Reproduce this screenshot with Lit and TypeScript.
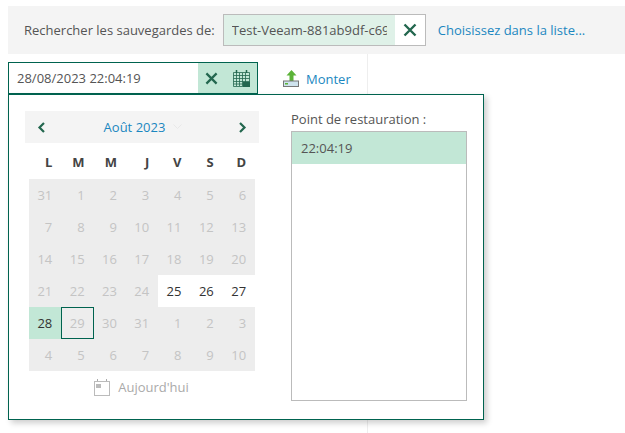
import { LitElement, html, css, svg } from "lit";
import { customElement } from "lit/decorators.js";

const XICON = svg`<path d="M1.5 1.5 L12.5 12.5 M12.5 1.5 L1.5 12.5" stroke="#23674f" stroke-width="2.4" fill="none"/>`;

const rows: [string, string][][] = [
  [31, 1, 2, 3, 4, 5, 6],
  [7, 8, 9, 10, 11, 12, 13],
  [14, 15, 16, 17, 18, 19, 20],
  [21, 22, 23, 24, 25, 26, 27],
  [28, 29, 30, 31, 1, 2, 3],
  [4, 5, 6, 7, 8, 9, 10],
].map((r, ri) =>
  r.map((d, ci) => {
    let c = "off";
    if (ri === 3 && ci >= 4) c = "on";
    if (ri === 4 && ci === 0) c = "sel";
    if (ri === 4 && ci === 1) c = "off today";
    return [String(d), c] as [string, string];
  })
);

@customElement("app-root")
export class AppRoot extends LitElement {
  static styles = css`
    :host { display: block; height: 433px; position: relative; overflow: hidden; background: #fff;
      font-family: "Open Sans", sans-serif; font-size: 13px; color: #555; padding: 6px 0 0 8px; box-sizing: border-box; }
    .bar { height: 48px; background: #f4f4f4; display: flex; align-items: center; padding-left: 16px; }
    .tag { margin-left: 8px; width: 203px; height: 32px; box-sizing: border-box; border: 1px solid #bbb; display: flex; background: #fff; }
    .tag-text { width: 171px; background: #dff1e8; padding: 0 8px 0 8px; box-sizing: border-box; }
    .tag-text div { line-height: 30px; overflow: hidden; white-space: nowrap; }
    .tag-x { flex: 1; display: flex; align-items: center; justify-content: center; }
    .link { color: #1b87c0; }
    .bar .link { margin-left: 12px; }
    .pane { width: 360px; height: 379px; box-sizing: border-box; border-right: 1px solid #eee; padding-top: 8px; display: flex; align-items: flex-start; }
    .field { width: 250px; height: 33px; box-sizing: border-box; border: 1px solid #00634f; border-bottom-width: 2px; display: flex; align-items: center; background: #fff; }
    .field span { flex: 1; padding-left: 8px; }
    .btns { width: 59px; height: 100%; background: #c2e7d6; display: flex; align-items: center; gap: 15px; padding-left: 7px; box-sizing: border-box; }
    .mount { display: flex; align-items: center; margin-left: 25px; height: 33px; gap: 6px; }
    .pop { position: absolute; left: 8px; top: 94px; width: 476px; height: 326px; box-sizing: border-box; background: #fff;
      border: 1px solid #00634f; box-shadow: 3px 3px 6px rgba(0,0,0,.2); padding: 16px 0 0 16px; display: flex; }
    .cal { width: 234px; }
    .head { height: 32px; background: #f4f4f4; display: flex; align-items: center; justify-content: space-between; padding: 0 12px; box-sizing: border-box; }
    .month { display: flex; align-items: center; gap: 8px; color: #1b87c0; margin-left: 2px; }
    .wk { display: grid; grid-template-columns: repeat(7, 32.3px); margin: 0 4px; height: 36px; align-items: center; font-weight: 700; color: #444; text-align: right; }
    .wk span { padding: 2px 9px 0 0; }
    .grid { display: grid; grid-template-columns: repeat(7, 32.3px); grid-auto-rows: 32px; margin: 0 4px; width: 226px; background: #ededed; }
    .d { text-align: right; padding-right: 9px; line-height: 32px; box-sizing: border-box; }
    .off { color: #c4c4c4; }
    .on { background: #fff; color: #333; }
    .sel { background: #c2e7d6; color: #333; }
    .today { outline: 1px solid #00634f; outline-offset: -1px; }
    .tbtn { display: flex; justify-content: center; align-items: center; gap: 8px; color: #aaa; height: 32px; margin-right: 1px; }
    .rp { margin-left: 32px; width: 176px; }
    .rp-label { height: 18px; line-height: 17px; }
    .list { margin-top: 2px; width: 176px; height: 270px; box-sizing: border-box; border: 1px solid #bbb; }
    .item { height: 32px; background: #c2e7d6; line-height: 33px; padding-left: 9px; }
  `;

  render() {
    return html`
      <div class="bar">
        <span>Rechercher les sauvegardes de:</span>
        <div class="tag">
          <div class="tag-text"><div>Test-Veeam-881ab9df-c69</div></div>
          <div class="tag-x"><svg width="14" height="14" viewBox="0 0 14 14">${XICON}</svg></div>
        </div>
        <span class="link">Choisissez dans la liste...</span>
      </div>
      <div class="pane">
        <div class="field">
          <span>28/08/2023 22:04:19</span>
          <div class="btns">
            <svg width="13" height="13" viewBox="0 0 14 14">${XICON}</svg>
            <svg width="17" height="17" viewBox="0 0 17 17">
              <path d="M3.5 0v3M13.5 0v3" stroke="#23674f" stroke-width="1.5"/>
              <path d="M.5 2.5h16v14H.5z M.5 5.5h16M.5 8.5h16M.5 11.5h16M.5 14h16M3.5 3v13M6.5 3v13M9.5 3v13M12.5 3v13" stroke="#23674f" stroke-opacity=".8" fill="none"/>
              <rect x="10" y="12" width="7" height="5" fill="#23674f"/>
            </svg>
          </div>
        </div>
        <div class="mount">
          <svg width="17" height="17" viewBox="0 0 17 17">
            <path d="M8.5 0 L13.5 5.5 H10.5 V11 H6.5 V5.5 H3.5 Z" fill="#5cb338"/>
            <rect x=".5" y="11" width="15" height="5.5" fill="#cfe3ee" stroke="#777"/>
            <rect x="2" y="13" width="3" height="1.5" fill="#5cb338"/>
          </svg>
          <span class="link">Monter</span>
        </div>
      </div>
      <div class="pop">
        <div class="cal">
          <div class="head">
            <svg width="9" height="11" viewBox="0 0 9 11"><path d="M7 1 L2.5 5.5 L7 10" stroke="#23674f" stroke-width="2.2" fill="none"/></svg>
            <div class="month">
              <span>Août 2023</span>
              <svg width="9" height="6" viewBox="0 0 9 6"><path d="M.5 .5 L4.5 4.5 L8.5 .5" stroke="#e8e8e8" fill="none"/></svg>
            </div>
            <svg width="9" height="11" viewBox="0 0 9 11"><path d="M2 1 L6.5 5.5 L2 10" stroke="#23674f" stroke-width="2.2" fill="none"/></svg>
          </div>
          <div class="wk">${["L", "M", "M", "J", "V", "S", "D"].map((d) => html`<span>${d}</span>`)}</div>
          <div class="grid">
            ${rows.flat().map(([d, c]) => html`<div class="d ${c}">${d}</div>`)}
          </div>
          <div class="tbtn">
            <svg width="16" height="17" viewBox="0 0 16 17">
              <path d="M3.5 0v3M12.5 0v3" stroke="#aaa"/>
              <rect x=".5" y="2.5" width="15" height="14" fill="none" stroke="#bbb"/>
              <rect x="2" y="5" width="5" height="4" fill="#bbb"/>
            </svg>
            <span>Aujourd'hui</span>
          </div>
        </div>
        <div class="rp">
          <div class="rp-label">Point de restauration :</div>
          <div class="list"><div class="item">22:04:19</div></div>
        </div>
      </div>
    `;
  }
}
